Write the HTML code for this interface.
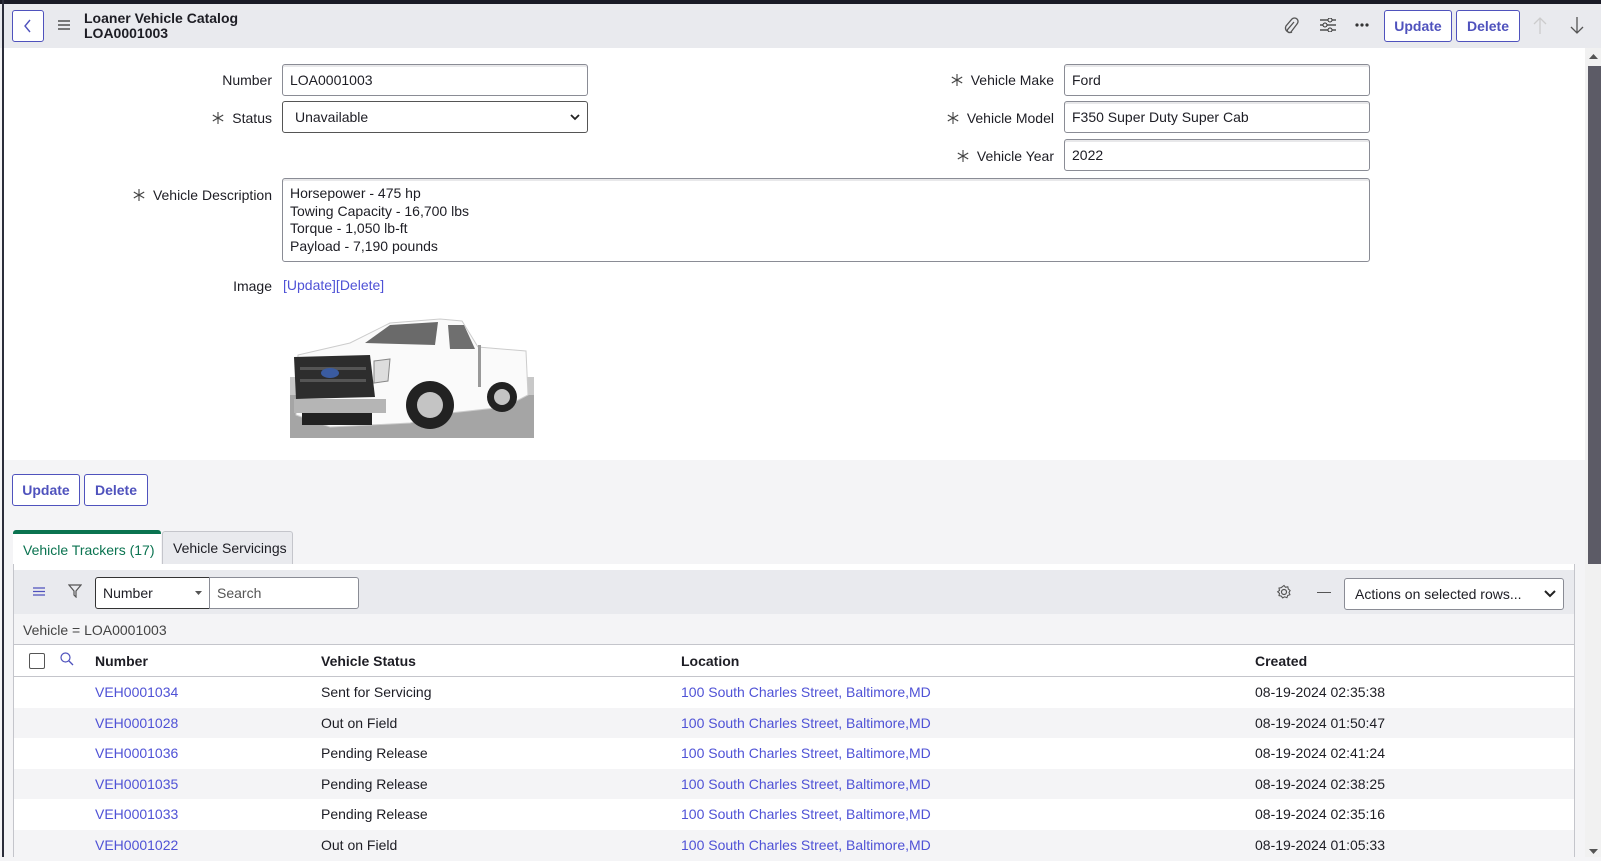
<!DOCTYPE html>
<html><head><meta charset="utf-8"><style>
*{box-sizing:border-box;margin:0;padding:0}
body{width:1601px;height:857px;overflow:hidden;background:#f4f4f6;font-family:"Liberation Sans",sans-serif;font-size:14px;color:#1d1d24;position:relative}
.a{position:absolute}
.top{left:0;top:0;width:1601px;height:4px;background:#1a1b26}
.hdr{left:0;top:4px;width:1601px;height:44px;background:#e9eaee}
.lb{left:2px;top:0;width:2px;height:857px;background:#2b2d3a}
.form{left:4px;top:48px;width:1581px;height:412px;background:#fff}
.btn{border:1px solid #4f52bd;border-radius:3px;background:#fff;color:#4f52bd;font-weight:bold;font-size:14px;display:flex;align-items:center;justify-content:center}
.lbl{text-align:right;font-size:14px;color:#1d1d24}
.inp{border:1px solid #8a8c95;border-radius:3px;background:#fff;padding:0 7px;display:flex;align-items:center;font-size:14px;box-shadow:inset 0 2px 0 #e8e8ea}
.ast{display:inline-block;width:12px;height:12px;margin-right:8px;vertical-align:-1px}
.lnk{color:#4f52d6}
.row{left:14px;width:1560px;height:31px}
.row span{position:absolute;top:7px}
</style></head><body>
<svg width="0" height="0" style="position:absolute"><defs><symbol id="as" viewBox="0 0 12 12"><path d="M6 0v12M0.8 3l10.4 6M0.8 9l10.4-6" stroke="#444" stroke-width="1.1"/></symbol></defs></svg>
<div class="a top"></div>
<div class="a hdr"></div>
<div class="a form"></div>
<div class="a lb"></div>

<div class="a btn" style="left:12px;top:10px;width:32px;height:32px"><svg width="12" height="16" viewBox="0 0 12 16"><path d="M8 2 L3 8 L8 14" fill="none" stroke="#4f52bd" stroke-width="1.4"/></svg></div>
<svg class="a" style="left:58px;top:20px" width="12" height="10"><path d="M0 1h12M0 5h12M0 9h12" stroke="#333" stroke-width="1.3"/></svg>
<div class="a" style="left:84px;top:11px;font-weight:bold;font-size:14px;line-height:15px">Loaner Vehicle Catalog<br>LOA0001003</div>

<svg class="a" style="left:1283px;top:17px" width="16" height="18" viewBox="0 0 16 18"><path d="M11 5 L5 12 a2 2 0 0 0 3 3 L14 7 a3.5 3.5 0 0 0 -5 -5 L3 9 a4.5 4.5 0 0 0 6 6" fill="none" stroke="#555" stroke-width="1.3"/></svg>
<svg class="a" style="left:1320px;top:18px" width="16" height="14"><path d="M0 2h16M0 7h16M0 12h16" stroke="#333" stroke-width="1.2"/><circle cx="10" cy="2" r="2" fill="#e9eaee" stroke="#333"/><circle cx="5" cy="7" r="2" fill="#e9eaee" stroke="#333"/><circle cx="10" cy="12" r="2" fill="#e9eaee" stroke="#333"/></svg>
<svg class="a" style="left:1355px;top:23px" width="14" height="4"><circle cx="2" cy="2" r="1.6" fill="#333"/><circle cx="7" cy="2" r="1.6" fill="#333"/><circle cx="12" cy="2" r="1.6" fill="#333"/></svg>
<div class="a btn" style="left:1384px;top:10px;width:68px;height:32px">Update</div>
<div class="a btn" style="left:1456px;top:10px;width:64px;height:32px">Delete</div>
<svg class="a" style="left:1533px;top:17px" width="14" height="17"><path d="M7 1v16M1 7l6-6 6 6" fill="none" stroke="#ccc" stroke-width="1.3"/></svg>
<svg class="a" style="left:1570px;top:17px" width="14" height="17"><path d="M7 0v16M1 10l6 6 6-6" fill="none" stroke="#555" stroke-width="1.3"/></svg>

<div class="a" style="left:1585px;top:48px;width:16px;height:809px;background:#f1f1f1"></div>
<div class="a" style="left:1588px;top:66px;width:13px;height:498px;background:#5c5b66"></div>
<svg class="a" style="left:1589px;top:54px" width="9" height="6"><path d="M0 5l4.5-5 4.5 5z" fill="#555"/></svg>
<svg class="a" style="left:1589px;top:849px" width="9" height="6"><path d="M0 0l4.5 5 4.5-5z" fill="#555"/></svg>

<div class="a lbl" style="left:100px;top:72px;width:172px">Number</div>
<div class="a inp" style="left:282px;top:64px;width:306px;height:32px">LOA0001003</div>
<div class="a lbl" style="left:100px;top:110px;width:172px"><svg class="ast"><use href="#as"/></svg>Status</div>
<div class="a inp" style="left:282px;top:101px;width:306px;height:32px;box-shadow:none;border-color:#555;justify-content:space-between;padding-left:12px">Unavailable<svg width="10" height="7"><path d="M1 1l4 4 4-4" fill="none" stroke="#222" stroke-width="1.8"/></svg></div>
<div class="a lbl" style="left:60px;top:187px;width:212px"><svg class="ast"><use href="#as"/></svg>Vehicle Description</div>
<div class="a inp" style="left:282px;top:178px;width:1088px;height:84px;padding-top:6px;line-height:17.5px;display:block">Horsepower - 475 hp<br>Towing Capacity - 16,700 lbs<br>Torque - 1,050 lb-ft<br>Payload - 7,190 pounds</div>
<div class="a lbl" style="left:100px;top:278px;width:172px">Image</div>
<div class="a lnk" style="left:283px;top:277px">[Update][Delete]</div>

<div class="a lbl" style="left:860px;top:72px;width:194px"><svg class="ast"><use href="#as"/></svg>Vehicle Make</div>
<div class="a inp" style="left:1064px;top:64px;width:306px;height:32px">Ford</div>
<div class="a lbl" style="left:860px;top:110px;width:194px"><svg class="ast"><use href="#as"/></svg>Vehicle Model</div>
<div class="a inp" style="left:1064px;top:101px;width:306px;height:32px">F350 Super Duty Super Cab</div>
<div class="a lbl" style="left:860px;top:148px;width:194px"><svg class="ast"><use href="#as"/></svg>Vehicle Year</div>
<div class="a inp" style="left:1064px;top:139px;width:306px;height:32px">2022</div>

<svg class="a" style="left:290px;top:315px" width="244" height="123" viewBox="0 0 244 123">
<rect x="0" y="62" width="244" height="61" fill="#a5a5a5"/>
<rect x="0" y="62" width="244" height="18" fill="#c8c8c8"/>
<path d="M8 40 L60 28 L100 8 L150 4 L172 6 L188 32 L236 36 L238 80 L215 92 L160 98 L120 108 L40 112 L6 100Z" fill="#fafafa" stroke="#ccc"/>
<path d="M75 28 L100 10 L148 7 L145 30Z" fill="#6a6a6a"/>
<path d="M158 10 L174 10 L185 34 L160 34Z" fill="#6f6f6f"/>
<rect x="188" y="30" width="3" height="42" fill="#999"/>
<path d="M4 42 L80 40 L85 82 L6 84Z" fill="#2d2d2d"/>
<rect x="10" y="52" width="66" height="3" fill="#555"/><rect x="10" y="64" width="66" height="3" fill="#555"/>
<ellipse cx="40" cy="58" rx="9" ry="5" fill="#3a5ba0"/>
<path d="M84 46 L100 44 L98 66 L84 68Z" fill="#ddd" stroke="#888"/>
<rect x="4" y="84" width="92" height="14" fill="#b5b5b5"/>
<rect x="12" y="98" width="70" height="12" fill="#222"/>
<circle cx="140" cy="90" r="24" fill="#222"/><circle cx="140" cy="90" r="13" fill="#c4c4c4"/>
<circle cx="212" cy="82" r="15" fill="#222"/><circle cx="212" cy="82" r="8" fill="#c4c4c4"/>
</svg>

<div class="a btn" style="left:12px;top:474px;width:68px;height:32px">Update</div>
<div class="a btn" style="left:84px;top:474px;width:64px;height:32px">Delete</div>

<div class="a" style="left:13px;top:530px;width:148px;height:36px;background:#fff;border-top:4px solid #0a7350;border-radius:3px 3px 0 0;color:#0a7350;padding:8px 0 0 10px">Vehicle Trackers (17)</div>
<div class="a" style="left:162px;top:531px;width:131px;height:34px;background:#e9eaee;border:1px solid #c4c5cb;border-bottom:none;border-radius:3px 3px 0 0;padding:8px 0 0 10px">Vehicle Servicings</div>

<div class="a" style="left:13px;top:564px;width:1562px;height:293px;background:#fff;border:1px solid #c4c5cb;border-top:none"></div>
<div class="a" style="left:14px;top:570px;width:1560px;height:44px;background:#e9eaee"></div>
<div class="a" style="left:14px;top:564px;width:1560px;height:6px;background:#fff"></div>
<svg class="a" style="left:33px;top:587px" width="12" height="9"><path d="M0 1h12M0 4.5h12M0 8h12" stroke="#4f52bd" stroke-width="1.2"/></svg>
<svg class="a" style="left:68px;top:584px" width="14" height="14"><path d="M1 1h12L8 7v6L6 11V7Z" fill="none" stroke="#555" stroke-width="1.2"/></svg>
<div class="a inp" style="left:95px;top:577px;width:115px;height:32px;border-color:#333;box-shadow:none;justify-content:space-between;border-radius:3px 0 0 3px">Number<svg width="7" height="4"><path d="M0 0h7L3.5 4z" fill="#555"/></svg></div>
<div class="a inp" style="left:209px;top:577px;width:150px;height:32px;box-shadow:none;color:#555;border-radius:0 3px 3px 0">Search</div>
<svg class="a" style="left:1276px;top:584px" width="16" height="16" viewBox="0 0 16 16"><circle cx="8" cy="8" r="2.5" fill="none" stroke="#555" stroke-width="1.2"/><path d="M8 1.5l1.5 1.8 2.3-.5.5 2.3 1.8 1.4-1.1 2 .9 2.2-2.2.8-.8 2.2-2.2-.9-2 1.1-1.4-1.8-2.3-.5.5-2.3-1.8-1.5 1.8-1.4-.5-2.3 2.3-.5z" fill="none" stroke="#555" stroke-width="1.1"/></svg>
<div class="a" style="left:1317px;top:592px;width:14px;height:1.2px;background:#555"></div>
<div class="a inp" style="left:1344px;top:578px;width:220px;height:32px;box-shadow:none;justify-content:space-between;padding-left:10px">Actions on selected rows...<svg width="12" height="8"><path d="M1 1l5 5 5-5" fill="none" stroke="#222" stroke-width="2"/></svg></div>
<div class="a" style="left:14px;top:614px;width:1560px;height:31px;background:#f4f4f6;border-bottom:1px solid #c4c5cb;padding:8px 0 0 9px;color:#444">Vehicle = LOA0001003</div>
<div class="a row" style="top:645px;height:32px;border-bottom:1px solid #c4c5cb;font-weight:bold">
<div class="a" style="left:15px;top:8px;width:16px;height:16px;border:1px solid #555;border-radius:2px;background:#fff"></div>
<svg class="a" style="left:46px;top:7px" width="14" height="14"><circle cx="5.5" cy="5.5" r="4.5" fill="none" stroke="#4f52bd" stroke-width="1.2"/><path d="M9 9l4 4" stroke="#4f52bd" stroke-width="1.3"/></svg>
<span style="left:81px;top:8px">Number</span><span style="left:307px;top:8px">Vehicle Status</span><span style="left:667px;top:8px">Location</span><span style="left:1241px;top:8px">Created</span></div>

<div class="a row" style="top:677px;background:#fff"><span class="lnk" style="left:81px">VEH0001034</span><span style="left:307px">Sent for Servicing</span><span class="lnk" style="left:667px">100 South Charles Street, Baltimore,MD</span><span style="left:1241px">08-19-2024 02:35:38</span></div>
<div class="a row" style="top:707.6px;background:#f4f4f6"><span class="lnk" style="left:81px">VEH0001028</span><span style="left:307px">Out on Field</span><span class="lnk" style="left:667px">100 South Charles Street, Baltimore,MD</span><span style="left:1241px">08-19-2024 01:50:47</span></div>
<div class="a row" style="top:738.2px;background:#fff"><span class="lnk" style="left:81px">VEH0001036</span><span style="left:307px">Pending Release</span><span class="lnk" style="left:667px">100 South Charles Street, Baltimore,MD</span><span style="left:1241px">08-19-2024 02:41:24</span></div>
<div class="a row" style="top:768.8px;background:#f4f4f6"><span class="lnk" style="left:81px">VEH0001035</span><span style="left:307px">Pending Release</span><span class="lnk" style="left:667px">100 South Charles Street, Baltimore,MD</span><span style="left:1241px">08-19-2024 02:38:25</span></div>
<div class="a row" style="top:799.4px;background:#fff"><span class="lnk" style="left:81px">VEH0001033</span><span style="left:307px">Pending Release</span><span class="lnk" style="left:667px">100 South Charles Street, Baltimore,MD</span><span style="left:1241px">08-19-2024 02:35:16</span></div>
<div class="a row" style="top:830px;background:#f4f4f6"><span class="lnk" style="left:81px">VEH0001022</span><span style="left:307px">Out on Field</span><span class="lnk" style="left:667px">100 South Charles Street, Baltimore,MD</span><span style="left:1241px">08-19-2024 01:05:33</span></div>
</body></html>
